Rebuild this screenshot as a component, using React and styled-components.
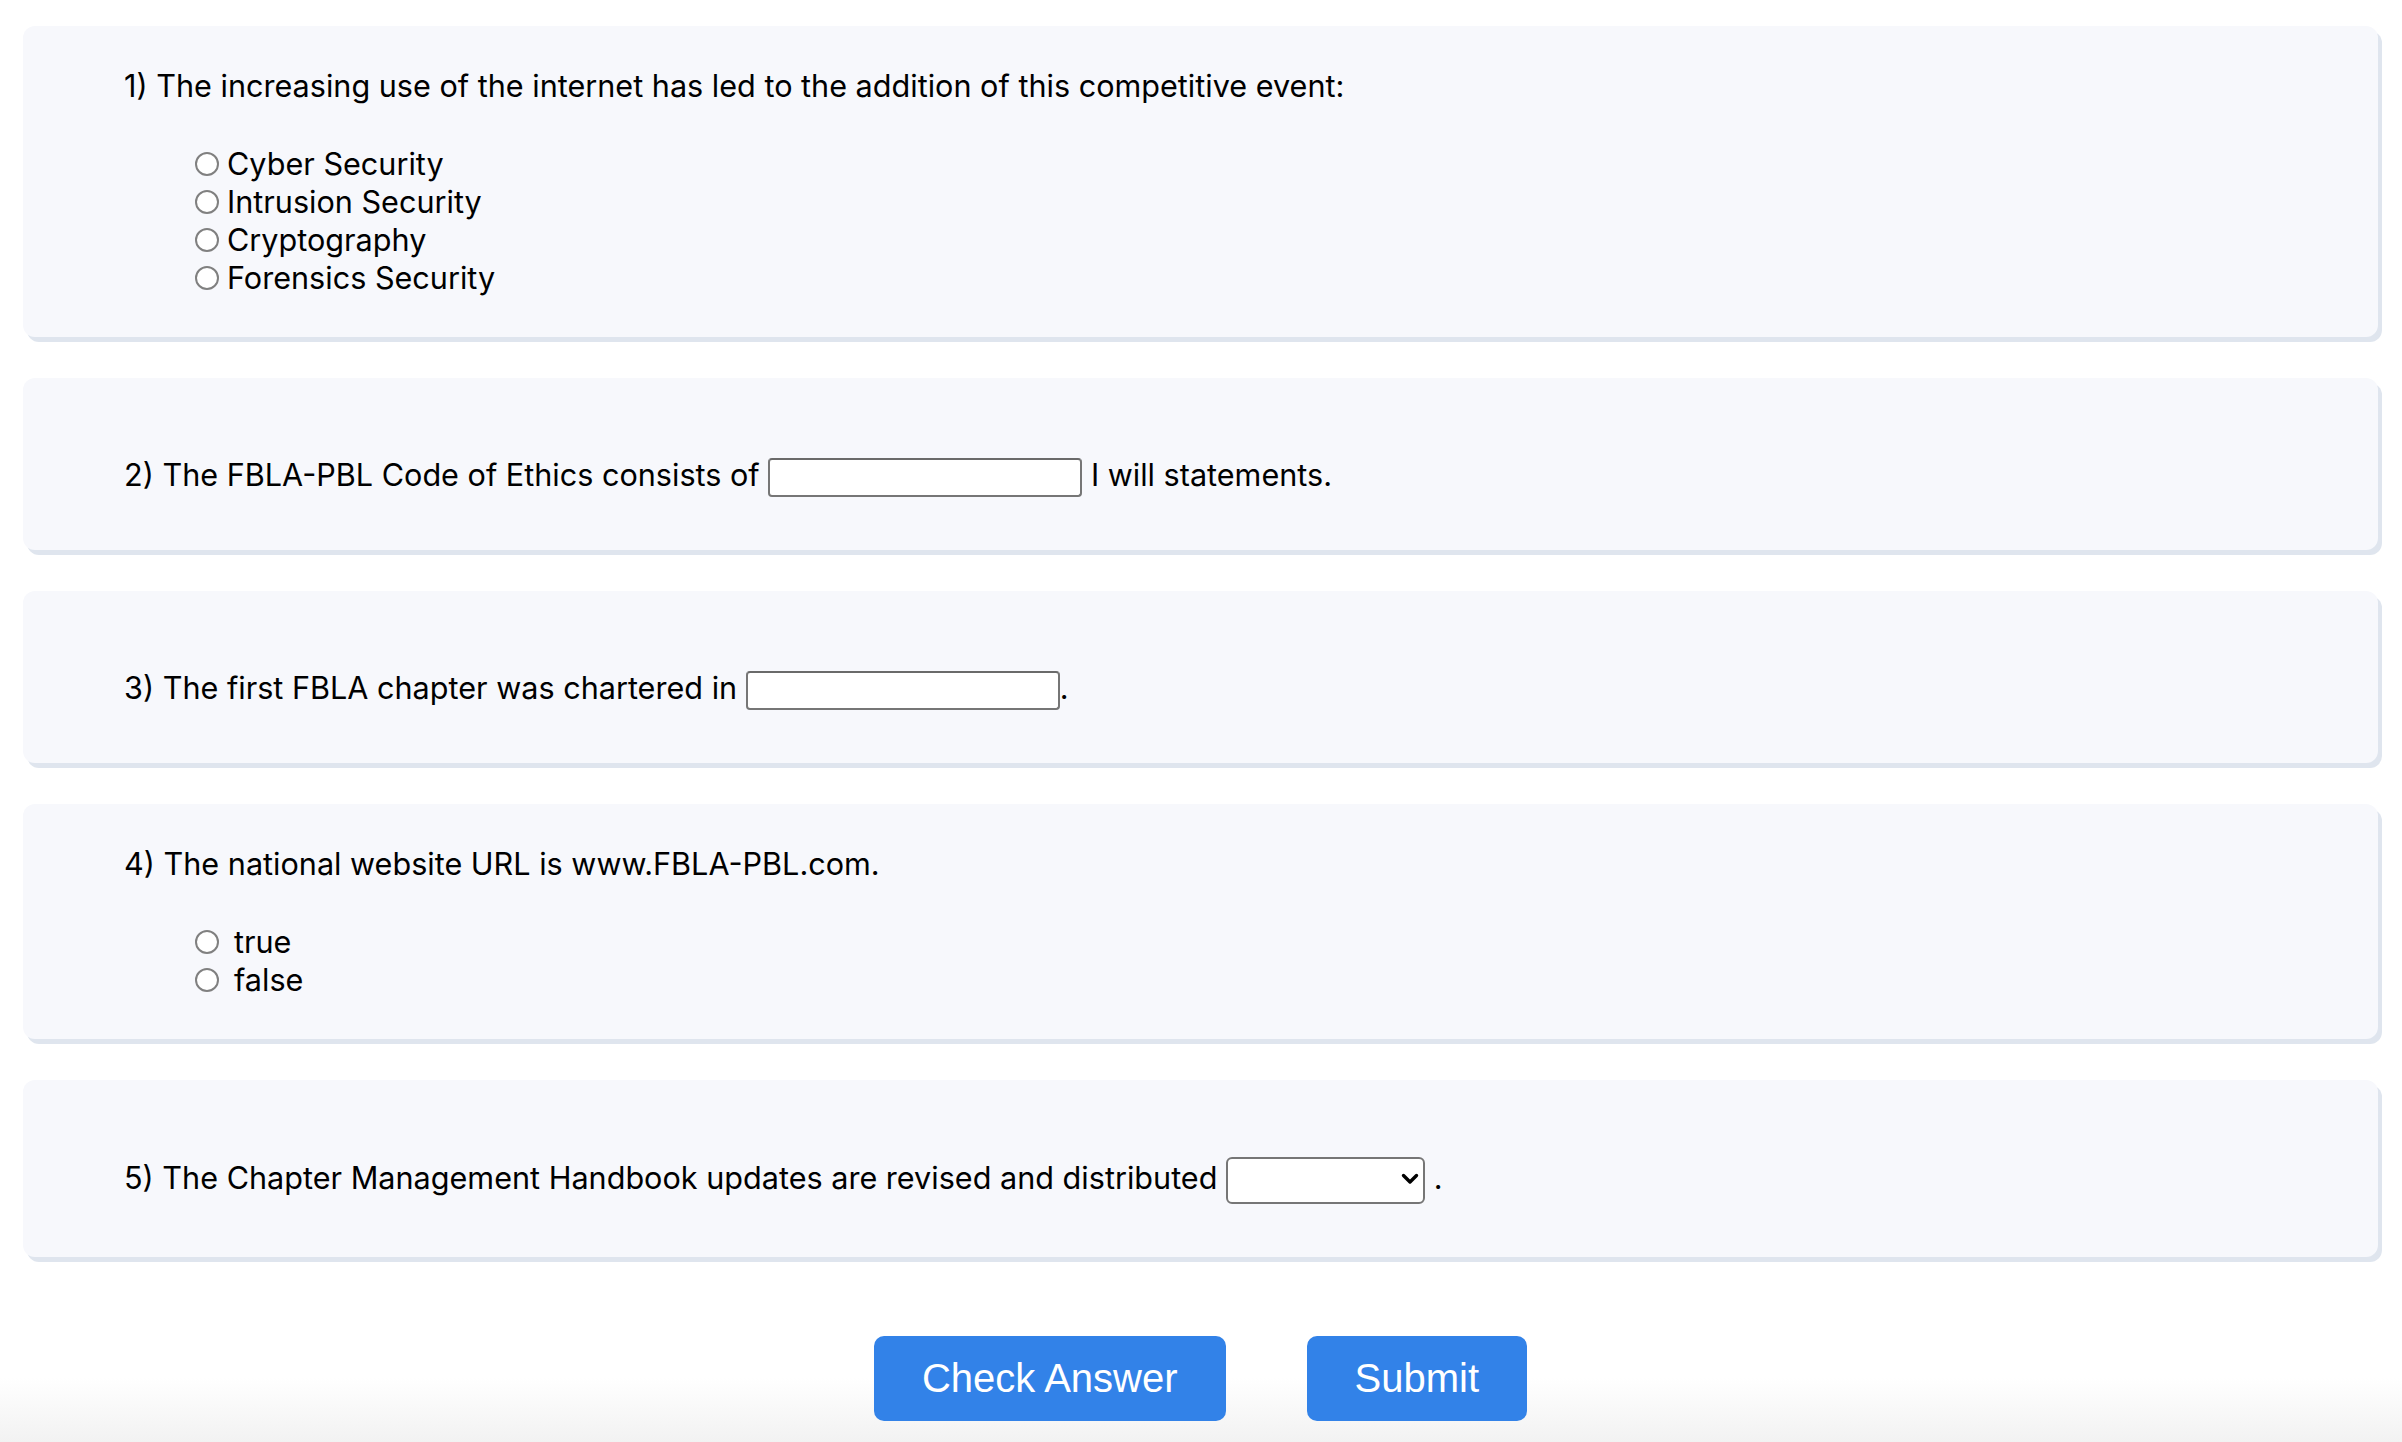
import React from "react"
import styled, { createGlobalStyle } from "styled-components"

const GlobalStyle = createGlobalStyle`
  * {
    box-sizing: border-box;
  }

  body {
    margin: 0;
    background: #fff;
    color: #000;
    font-family: Inter, "Noto Sans", sans-serif;
  }
`

const questions = [
  {
    id: 1,
    kind: "radio",
    text: "1) The increasing use of the internet has led to the addition of this competitive event:",
    options: ["Cyber Security", "Intrusion Security", "Cryptography", "Forensics Security"],
  },
  { id: 2, kind: "text", before: "2) The FBLA-PBL Code of Ethics consists of", after: " I will statements." },
  { id: 3, kind: "text", before: "3) The first FBLA chapter was chartered in", after: "." },
  {
    id: 4,
    kind: "radio",
    text: "4) The national website URL is www.FBLA-PBL.com.",
    options: ["true", "false"],
    spaced: true,
  },
  { id: 5, kind: "select", before: "5) The Chapter Management Handbook updates are revised and distributed", after: " ." },
]

const App = () => {
  return (
    <Page>
      <GlobalStyle />
      <Quiz>
        {questions.map((q) => (
          <Card key={q.id}>
            {q.kind === "radio" ? (
              <>
                <Question>{q.text}</Question>
                <Options>
                  {q.options.map((opt) => (
                    <Option key={opt} $spaced={q.spaced}>
                      <Radio type="radio" name={`q${q.id}`} />
                      {opt}
                    </Option>
                  ))}
                </Options>
              </>
            ) : (
              <Question $inline>
                {q.before}{" "}
                {q.kind === "text" ? (
                  <TextInput type="text" />
                ) : (
                  <SelectWrap>
                    <Select defaultValue="">
                      <option value=""></option>
                      <option>annually</option>
                      <option>monthly</option>
                    </Select>
                    <Chevron viewBox="0 0 18 12">
                      <path d="M2.5 2.5 L9 9 L15.5 2.5" />
                    </Chevron>
                  </SelectWrap>
                )}
                {q.after}
              </Question>
            )}
          </Card>
        ))}
      </Quiz>
      <Actions>
        <Button>Check Answer</Button>
        <Button>Submit</Button>
      </Actions>
    </Page>
  )
}

const Page = styled.div`
  min-height: 100vh;
  padding: 26px 24px 20px 23px;
  background: linear-gradient(to bottom, #fff calc(100% - 64px), #f2f2f2 100%);
`

const Quiz = styled.div`
  display: flex;
  flex-direction: column;
  gap: 41px;
`

const Card = styled.div`
  background: #f7f8fc;
  border-radius: 12px;
  box-shadow: 4px 5px 0 #dfe5ee;
  padding: 41px 100px 41px 101px;
`

const Question = styled.div`
  font-size: 30.6px;
  line-height: ${(p) => (p.$inline ? "40px" : "38px")};
  margin: ${(p) => (p.$inline ? "36px 0 12px" : "0")};
`

const Options = styled.div`
  display: flex;
  flex-direction: column;
  margin-top: 39px;
  padding-left: 71px;
`

const Option = styled.label`
  display: flex;
  align-items: center;
  gap: ${(p) => (p.$spaced ? "15px" : "8px")};
  height: 38px;
  font-size: 30.6px;
`

const Radio = styled.input`
  appearance: none;
  width: 24px;
  height: 24px;
  margin: 2px 0 0;
  border: 2px solid #808080;
  border-radius: 50%;
  background: #fff;
`

const TextInput = styled.input`
  width: 314px;
  height: 39px;
  margin: 0;
  border: 2px solid #767676;
  border-top-color: #6a6a6a;
  border-radius: 4px;
  background: #fff;
  vertical-align: middle;
  font-size: 20px;
`

const SelectWrap = styled.span`
  position: relative;
  display: inline-block;
  vertical-align: middle;
`

const Select = styled.select`
  appearance: none;
  display: block;
  width: 199px;
  height: 47px;
  margin: 0;
  border: 2px solid #767676;
  border-radius: 6px;
  background: #fff;
  font-size: 22px;
`

const Chevron = styled.svg`
  position: absolute;
  right: 6px;
  top: 16px;
  width: 18px;
  height: 12px;
  fill: none;
  stroke: #000;
  stroke-width: 3.4;
  stroke-linecap: round;
  stroke-linejoin: round;
  pointer-events: none;
`

const Actions = styled.div`
  display: flex;
  justify-content: center;
  gap: 81px;
  margin-top: 79px;
`

const Button = styled.button`
  height: 85px;
  padding: 0 48px;
  border: none;
  border-radius: 10px;
  background: #3282e8;
  color: #fff;
  font-family: "Liberation Sans", Arial, sans-serif;
  font-size: 40px;
  cursor: pointer;
`

export default App
